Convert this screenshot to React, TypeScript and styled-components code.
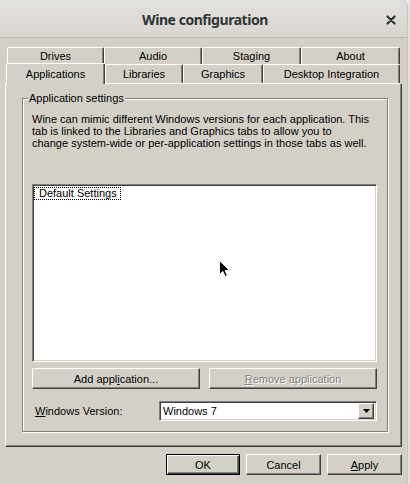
import React from "react";
import styled, { createGlobalStyle } from "styled-components";

const GlobalStyle = createGlobalStyle`
  html, body {
    margin: 0;
    padding: 0;
    background: #ebebeb;
  }
  body {
    font-family: "Liberation Sans", Arial, sans-serif;
    font-size: 11px;
    color: #000;
  }
  * { box-sizing: border-box; }
`;

const FACE = "#d4d0c8";
const SHADOW = "#808080";
const DARK = "#404040";

const Window = styled.div`
  width: 407px;
  height: 484px;
  background: ${FACE};
  border-top-right-radius: 8px;
  overflow: hidden;
  display: flex;
  flex-direction: column;
  box-shadow: 1px 0 2px rgba(0, 0, 0, 0.22);
`;

const TitleBar = styled.header`
  flex: none;
  height: 38px;
  padding-top: 2px;
  border-bottom: 1px solid #bab6af;
  background: linear-gradient(#e3e1dd, #d9d6d1);
  display: grid;
  grid-template-columns: 1fr auto 1fr;
  align-items: center;
`;

const Title = styled.h1`
  grid-column: 2;
  margin: 0 0 0 3px;
  font-family: "Noto Sans", "DejaVu Sans", sans-serif;
  font-weight: 700;
  font-size: 14px;
  letter-spacing: -0.45px;
  color: #2e3436;
`;

const CloseButton = styled.button`
  grid-column: 3;
  justify-self: end;
  width: 16px;
  height: 16px;
  margin-right: 8px;
  padding: 0;
  border: none;
  background: transparent;
  display: flex;
  align-items: center;
  justify-content: center;
`;

const Body = styled.div`
  flex: 1;
  display: flex;
  flex-direction: column;
  padding: 9px 5px 0;
`;

const Tabs = styled.div`
  display: flex;
  flex-direction: column;
`;

const TabRow = styled.div<{ $indent: number; $height: number }>`
  display: flex;
  align-items: stretch;
  padding-left: ${(p) => p.$indent}px;
  height: ${(p) => p.$height}px;
`;

const Tab = styled.div<{ $w: number; $active?: boolean }>`
  width: ${(p) => p.$w}px;
  display: flex;
  align-items: center;
  justify-content: center;
  padding-bottom: 1px;
  background: ${FACE};
  border-top: 1px solid #fff;
  border-left: 1px solid #fff;
  border-right: 1px solid ${DARK};
  box-shadow: inset -1px 0 ${SHADOW};
  border-top-left-radius: 2px;
  border-top-right-radius: 2px;
  white-space: nowrap;
  ${(p) =>
    p.$active &&
    `
    position: relative;
    z-index: 1;
    margin-top: -1px;
    margin-bottom: -1px;
  `}
`;

const Panel = styled.section`
  flex: none;
  height: 364px;
  display: flex;
  flex-direction: column;
  border: 1px solid;
  border-color: #fff ${DARK} ${DARK} #fff;
  box-shadow: inset -1px -1px ${SHADOW};
  padding: 14px 13px 14px 16px;
`;

const Group = styled.div`
  flex: 1;
  display: flex;
  flex-direction: column;
  border: 1px solid ${SHADOW};
  box-shadow: inset 1px 1px #fff, 1px 1px #fff;
  padding: 0 10px 10px 9px;
`;

const GroupLabel = styled.span`
  align-self: flex-start;
  margin: -7px 0 0 -4px;
  padding: 0 1px;
  line-height: 13px;
  background: ${FACE};
`;

const Description = styled.p`
  margin: 8px 0 0;
  line-height: 12px;
  white-space: nowrap;
`;

const ListBox = styled.div`
  position: relative;
  flex: 1;
  min-height: 0;
  margin-top: 35px;
  background: #fff;
  border: 1px solid;
  border-color: ${SHADOW} #fff #fff ${SHADOW};
  box-shadow: inset 1px 1px ${DARK}, inset -1px -1px ${FACE};
  display: flex;
  flex-direction: column;
  align-items: flex-start;
`;

const ListItem = styled.div`
  margin: 2px 0 0 1px;
  padding: 0 3px 0 4px;
  line-height: 11px;
  border: 1px dotted #000;
`;

const Pointer = styled.svg`
  position: absolute;
  left: 185px;
  top: 74px;
`;

const ButtonRow = styled.div`
  display: flex;
  gap: 9px;
  margin-top: 6px;
`;

const PushButton = styled.button<{ $w: number; $default?: boolean }>`
  width: ${(p) => p.$w}px;
  height: 21px;
  padding: 0;
  background: ${FACE};
  font-family: "Liberation Sans", Arial, sans-serif;
  font-size: 11px;
  color: #000;
  border: 1px solid;
  border-color: #fff ${DARK} ${DARK} #fff;
  box-shadow: inset -1px -1px ${SHADOW};
  ${(p) =>
    p.$default &&
    `
    border-color: #000;
    box-shadow: inset 1px 1px #fff, inset -1px -1px ${DARK}, inset -2px -2px ${SHADOW};
  `}
  &:disabled {
    color: ${SHADOW};
    text-shadow: 1px 1px #fff;
  }
`;

const Key = styled.span`
  text-decoration: underline;
  text-underline-offset: 1px;
`;

const VersionRow = styled.div`
  display: flex;
  align-items: center;
  margin-top: 12px;
`;

const FieldLabel = styled.label`
  width: 127px;
  padding-left: 3px;
`;

const Combo = styled.div`
  width: 218px;
  height: 20px;
  display: flex;
  align-items: center;
  padding: 2px;
  background: #fff;
  border: 1px solid;
  border-color: ${SHADOW} #fff #fff ${SHADOW};
  box-shadow: inset 1px 1px ${DARK}, inset -1px -1px ${FACE};
`;

const ComboText = styled.span`
  flex: 1;
  padding-left: 1px;
`;

const ComboButton = styled.span`
  width: 16px;
  height: 16px;
  display: flex;
  align-items: center;
  justify-content: center;
  background: ${FACE};
  border: 1px solid;
  border-color: #fff ${DARK} ${DARK} #fff;
  box-shadow: inset -1px -1px ${SHADOW};
`;

const DialogButtons = styled.div`
  display: flex;
  justify-content: flex-end;
  gap: 6px;
  margin-top: 7px;
`;

const topTabs = [
  { label: "Drives", w: 97 },
  { label: "Audio", w: 98 },
  { label: "Staging", w: 99 },
  { label: "About", w: 99 },
];

const frontTabs = [
  { label: "Applications", w: 99, active: true },
  { label: "Libraries", w: 78 },
  { label: "Graphics", w: 80 },
  { label: "Desktop Integration", w: 137 },
];

export default function App() {
  return (
    <>
      <GlobalStyle />
      <Window>
        <TitleBar>
          <Title>Wine configuration</Title>
          <CloseButton aria-label="Close">
            <svg width="10" height="10" viewBox="0 0 10 10">
              <path
                d="M1.5 1.5 L8.5 8.5 M8.5 1.5 L1.5 8.5"
                stroke="#2e3436"
                strokeWidth="2.2"
                strokeLinecap="round"
              />
            </svg>
          </CloseButton>
        </TitleBar>
        <Body>
          <Tabs>
            <TabRow $indent={2} $height={17}>
              {topTabs.map((t) => (
                <Tab key={t.label} $w={t.w}>
                  {t.label}
                </Tab>
              ))}
            </TabRow>
            <TabRow $indent={1} $height={19}>
              {frontTabs.map((t) => (
                <Tab key={t.label} $w={t.w} $active={t.active}>
                  {t.label}
                </Tab>
              ))}
            </TabRow>
          </Tabs>
          <Panel>
            <Group>
              <GroupLabel>Application settings</GroupLabel>
              <Description>
                Wine can mimic different Windows versions for each application. This
                <br />
                tab is linked to the Libraries and Graphics tabs to allow you to
                <br />
                change system-wide or per-application settings in those tabs as well.
              </Description>
              <ListBox>
                <ListItem>Default Settings</ListItem>
                <Pointer width="13" height="19" viewBox="0 0 13 19">
                  <path
                    d="M1.5 1.5 L1.5 15.5 L4.8 12.4 L7.2 17.6 L9.4 16.6 L7.1 11.6 L11.6 11.6 Z"
                    fill="#000"
                    stroke="#fff"
                    strokeWidth="1"
                    strokeLinejoin="round"
                  />
                </Pointer>
              </ListBox>
              <ButtonRow>
                <PushButton $w={168}>
                  Add appl<Key>i</Key>cation...
                </PushButton>
                <PushButton $w={168} disabled>
                  <Key>R</Key>emove application
                </PushButton>
              </ButtonRow>
              <VersionRow>
                <FieldLabel>
                  <Key>W</Key>indows Version:
                </FieldLabel>
                <Combo>
                  <ComboText>Windows 7</ComboText>
                  <ComboButton>
                    <svg width="7" height="4" viewBox="0 0 7 4">
                      <path d="M0 0 H7 L3.5 4 Z" fill="#000" />
                    </svg>
                  </ComboButton>
                </Combo>
              </VersionRow>
            </Group>
          </Panel>
          <DialogButtons>
            <PushButton $w={74} $default>
              OK
            </PushButton>
            <PushButton $w={75}>Cancel</PushButton>
            <PushButton $w={75}>
              <Key>A</Key>pply
            </PushButton>
          </DialogButtons>
        </Body>
      </Window>
    </>
  );
}
